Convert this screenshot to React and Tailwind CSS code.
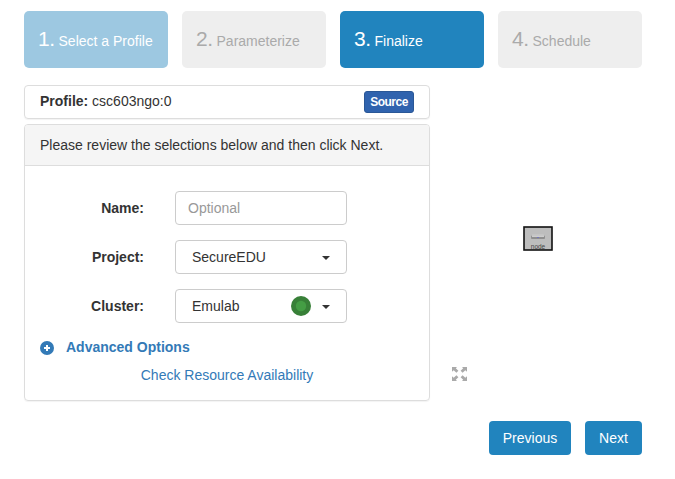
import React from "react";

const steps = [
  { n: "1.", label: "Select a Profile", cls: "bg-[#9dc8e1] text-white" },
  { n: "2.", label: "Parameterize", cls: "bg-[#eeeeee] text-[#aaaaaa]" },
  { n: "3.", label: "Finalize", cls: "bg-[#2184be] text-white" },
  { n: "4.", label: "Schedule", cls: "bg-[#eeeeee] text-[#aaaaaa]" },
];

function Caret() {
  return (
    <svg width="8" height="4" viewBox="0 0 8 4" className="mt-px shrink-0">
      <path d="M0 0H8L4 4Z" fill="#333" />
    </svg>
  );
}

function Field({ label, children }) {
  return (
    <div className="flex h-[34px] items-center">
      <label className="w-[119px] text-right font-bold">{label}</label>
      {children}
    </div>
  );
}

const box =
  "ml-[31px] flex h-[34px] w-[172px] items-center rounded-[4px] border border-[#cccccc] bg-white";

function ExpandIcon() {
  return (
    <svg width="15" height="14" viewBox="0 0 15 14" fill="#aaaaaa" className="block">
      <path d="M0 0H5L3.8 1.2L6.4 3.8L4.4 5.8L1.7 3.2L0 4.8Z" />
      <path d="M15 0H10L11.2 1.2L8.6 3.8L10.6 5.8L13.3 3.2L15 4.8Z" />
      <path d="M0 14H5L3.8 12.8L6.4 10.2L4.4 8.2L1.7 10.8L0 9.2Z" />
      <path d="M15 14H10L11.2 12.8L8.6 10.2L10.6 8.2L13.3 10.8L15 9.2Z" />
    </svg>
  );
}

function TopologyNode() {
  return (
    <svg width="30" height="26" viewBox="0 0 30 26" className="block">
      <rect x="1" y="1" width="28" height="23" fill="#bdbdbd" stroke="#111" strokeWidth="1.6" />
      <path d="M9.5 8.5H20.5L22 10.5H8Z" fill="#cccccc" />
      <rect x="8" y="9.5" width="14" height="3.5" rx="1" fill="#8f8f8f" />
      <rect x="9" y="9.5" width="12" height="1.3" fill="#dddddd" />
      <rect x="14" y="11" width="2" height="1" fill="#7777bb" />
      <text x="15" y="22.5" textAnchor="middle" fontSize="6.5" fill="#444">
        node
      </text>
    </svg>
  );
}

export default function App() {
  return (
    <div className="h-[479px] w-[675px] overflow-hidden bg-white pl-6 pt-[11px] font-['Liberation_Sans',Arial,sans-serif] text-[14px] leading-5 text-[#333333]">
      <nav className="flex gap-[14px]">
        {steps.map((s) => (
          <div
            key={s.n}
            className={`flex h-[57px] w-36 items-baseline whitespace-nowrap rounded-[5px] pl-[14px] pt-[14px] ${s.cls}`}
          >
            <span className="text-[21px] leading-[28px] tracking-[-0.5px]">{s.n}</span>
            <span className="ml-1">{s.label}</span>
          </div>
        ))}
      </nav>

      <main className="mt-[17px] flex">
        <div className="w-[406px]">
          <section className="flex h-[34px] items-center justify-between rounded-[4px] border border-[#dddddd] pl-[15px] pr-[15px] shadow-[0_1px_1px_rgba(0,0,0,0.05)]">
            <div className="-mt-[3px]">
              <b>Profile:</b> csc603ngo:0
            </div>
            <button className="h-[22px] w-[50px] rounded-[3px] border border-[#2a5796] bg-[#3063ae] text-[12px] leading-[20px] font-bold tracking-[-0.5px] text-white">
              Source
            </button>
          </section>

          <section className="mt-[5px] h-[277px] rounded-[4px] border border-[#dddddd] shadow-[0_1px_1px_rgba(0,0,0,0.05)]">
            <header className="h-[41px] rounded-t-[3px] border-b border-[#dddddd] bg-[#f5f5f5] pl-[15px] pt-[10px]">
              Please review the selections below and then click Next.
            </header>
            <div className="flex flex-col gap-[15px] pt-[25px]">
              <Field label="Name:">
                <input
                  placeholder="Optional"
                  className={`${box} px-3 outline-none placeholder:text-[#999999]`}
                />
              </Field>
              <Field label="Project:">
                <div className={`${box} justify-between pl-4 pr-4`}>
                  <span>SecureEDU</span>
                  <Caret />
                </div>
              </Field>
              <Field label="Cluster:">
                <div className={`${box} pl-4 pr-4`}>
                  <span className="flex-1">Emulab</span>
                  <svg width="20" height="20" viewBox="0 0 20 20" className="mr-[11px]">
                    <circle cx="10" cy="10" r="10" fill="#388038" />
                    <circle cx="10" cy="10" r="5.2" fill="#449d44" />
                  </svg>
                  <Caret />
                </div>
              </Field>
            </div>
            <div className="mt-[14px] flex items-center pl-[15px] font-bold text-[#337ab7]">
              <svg width="14" height="14" viewBox="0 0 14 14" className="mr-3 mt-[2px]">
                <circle cx="7" cy="7" r="7" fill="#337ab7" />
                <path d="M7 4V10M4 7H10" stroke="white" strokeWidth="2" />
              </svg>
              Advanced Options
            </div>
            <a className="mt-2 block text-center text-[#337ab7]">Check Resource Availability</a>
          </section>
        </div>

        <aside className="flex flex-1 flex-col">
          <div className="ml-[93px] mt-[141px]">
            <TopologyNode />
          </div>
          <div className="ml-[22px] mt-[115px]">
            <ExpandIcon />
          </div>
        </aside>
      </main>

      <footer className="mt-5 flex justify-end gap-[14px] pr-[33px] text-white">
        <button className="h-[34px] w-[82px] rounded-[4px] bg-[#2184be]">Previous</button>
        <button className="h-[34px] w-[57px] rounded-[4px] bg-[#2184be]">Next</button>
      </footer>
    </div>
  );
}
